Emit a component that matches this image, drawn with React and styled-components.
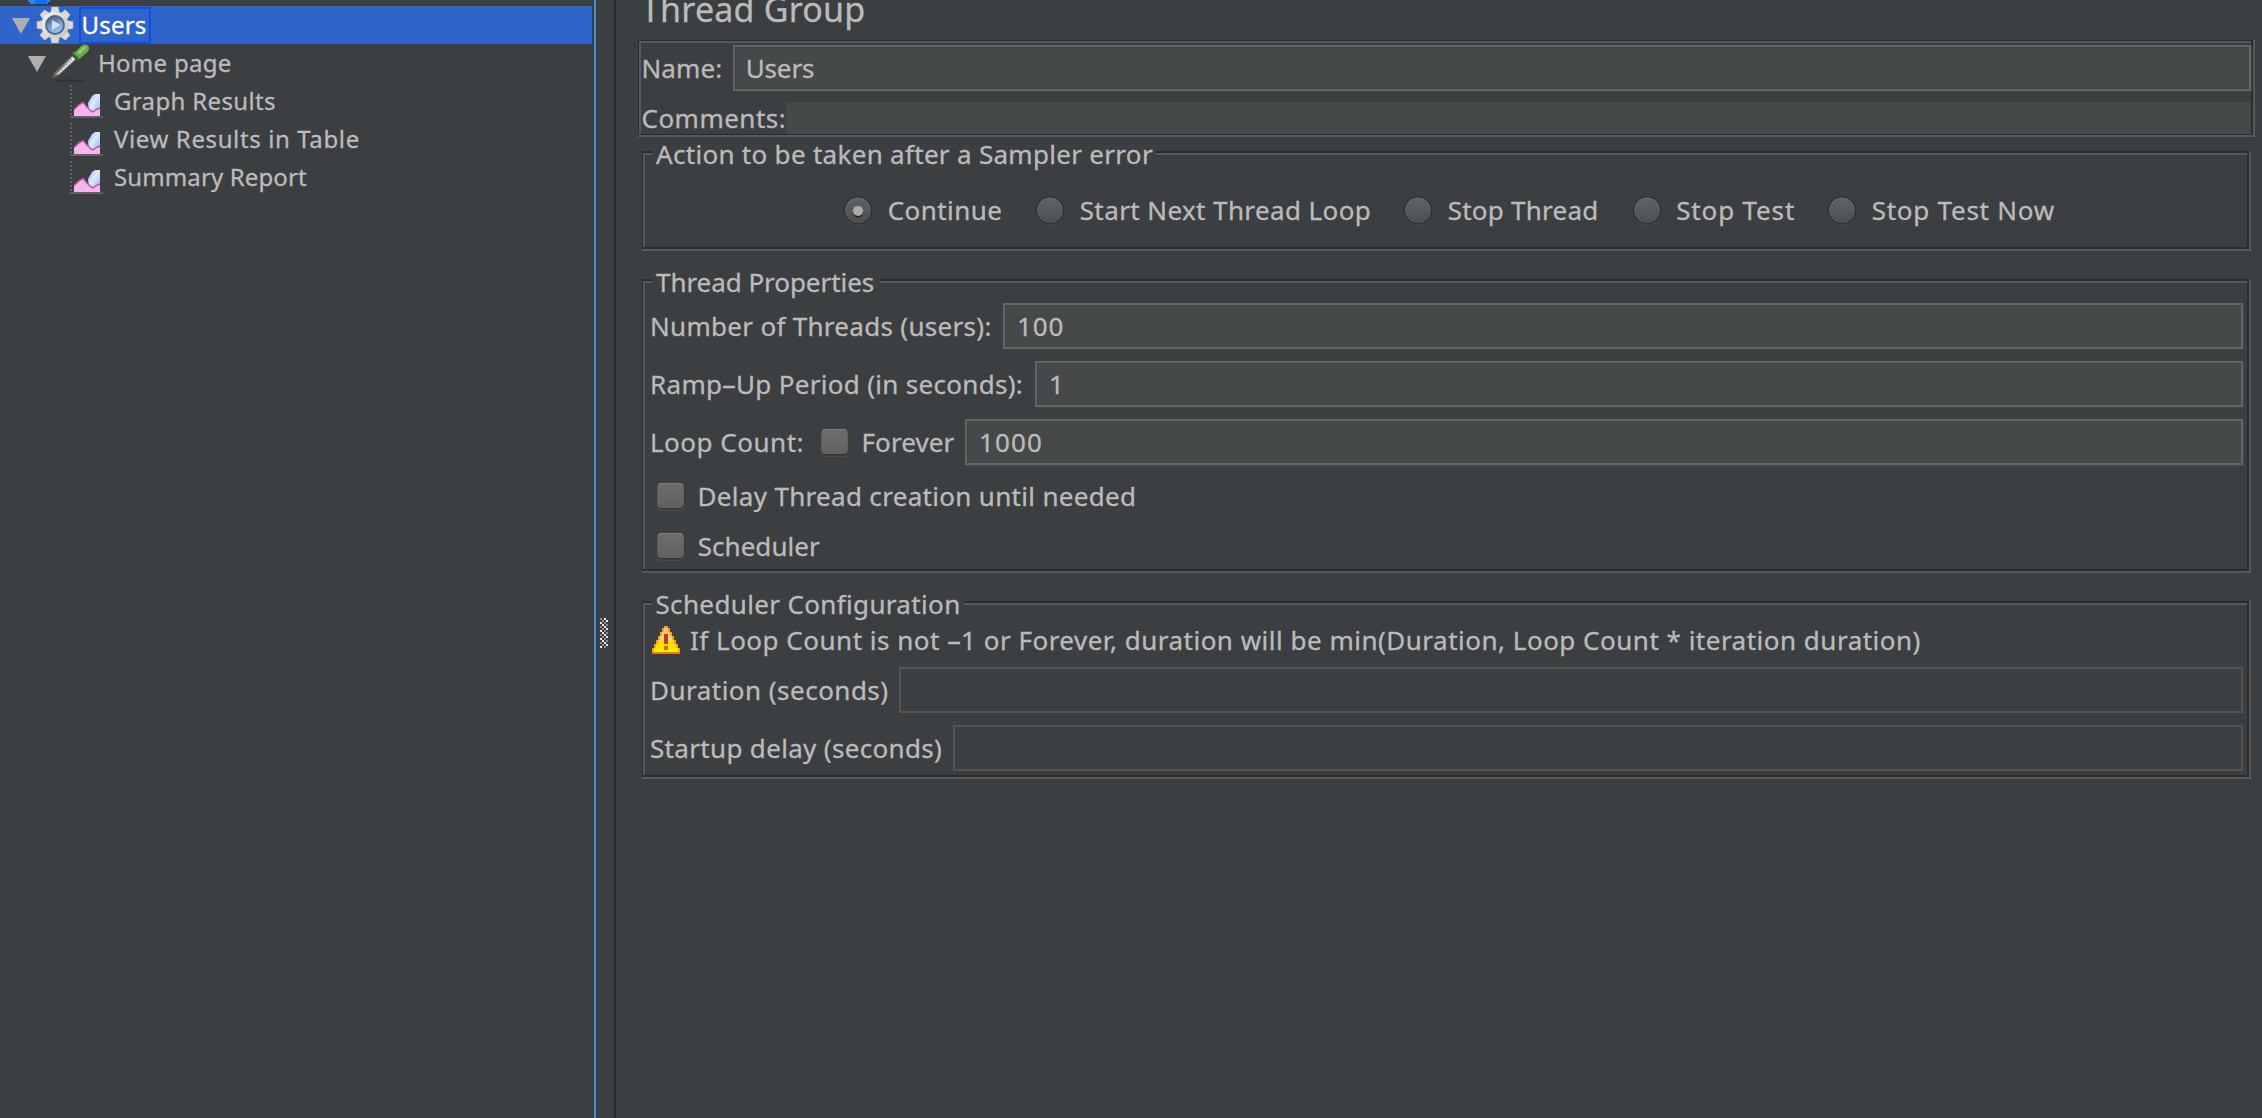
import React from "react";
import styled, { createGlobalStyle } from "styled-components";

const color = {
  bg: "#3c3f41",
  text: "#bbbbbb",
  dark: "#2b2d2f",
  light: "#565a5c",
  field: "#45494a",
  fieldBorder: "#646464",
  disabledBorder: "#55524f",
  selection: "#2f65ca",
};

const GlobalStyle = createGlobalStyle`
  * { box-sizing: border-box; }
  html, body { margin: 0; background: ${color.bg}; overflow: hidden; }
  svg { display: block; flex: none; }
`;

const Window = styled.div`
  display: flex;
  width: 100vw;
  height: 100vh;
  overflow: hidden;
  background: ${color.bg};
  color: ${color.text};
  font: 26px/30px "Noto Sans", "Open Sans", sans-serif;
  -webkit-text-stroke: 0.3px currentColor;
  white-space: nowrap;
`;

/* ---------- tree ---------- */

const Sidebar = styled.aside`
  flex: none;
  width: 596px;
  border-right: 2px solid #4a90cf;
  font-size: 24px;
`;

const CutRow = styled.div`
  height: 6px;
  padding-left: 28px;
  overflow: hidden;
`;

const TreeRow = styled.div`
  display: flex;
  align-items: center;
  height: 38px;
  margin-right: 2px;
  padding-left: ${(p) => p.$indent}px;
  background: ${(p) => (p.$selected ? color.selection : "transparent")};
  color: ${(p) => (p.$selected ? "#ffffff" : color.text)};
`;

const Toggle = styled.svg`
  margin: 2px 6px 0 0;
  fill: #afafaf;
`;

const TreeLabel = styled.span`
  margin-left: ${(p) => p.$gap}px;
  letter-spacing: ${(p) => p.$ls}px;
`;

const FocusLabel = styled.span`
  width: 72px;
  height: 37px;
  margin: 0 0 0 5px;
  padding-left: 0.5px;
  border: 2px solid #0b51dd;
  line-height: 32px;
  letter-spacing: 0.2px;
`;

/* ---------- splitter ---------- */

const Splitter = styled.div`
  flex: none;
  width: 20px;
  padding: 618px 0 0 4px;
  border-right: 2px solid #28292a;
`;

/* ---------- form ---------- */

const Form = styled.main`
  flex: 1;
  min-width: 0;
  padding: 0 7px 0 22px;
`;

const Title = styled.h1`
  margin: 0 0 21px 3px;
  font-size: 34px;
  font-weight: 400;
  line-height: 19px;
  letter-spacing: 0.2px;
`;

const Etched = styled.section`
  border: solid ${color.light};
  border-width: 0 2px 2px 0;
`;

const EtchedInner = styled.div`
  border: 2px solid ${color.dark};
  border-left-width: 1px;
  box-shadow: inset 2px 2px 0 ${color.light};
`;

const HeaderInner = styled(EtchedInner)`
  height: 95px;
  border-top-width: 1px;
  border-bottom-width: 1px;
  padding: 4px 0 0 2px;
`;

const Groups = styled.div`
  display: flex;
  flex-direction: column;
  gap: 28px;
  margin: 14px 4px 0;
`;

const GroupInner = styled(EtchedInner)`
  padding: 0 4px ${(p) => p.$bottom}px 7px;
`;

const Legend = styled.h2`
  width: ${(p) => p.$w}px;
  height: 28px;
  margin: -13px 0 0 2px;
  padding-left: ${(p) => p.$pad || 3}px;
  background: ${color.bg};
  font-size: 26px;
  font-weight: 400;
  line-height: 28px;
  letter-spacing: ${(p) => p.$ls}px;
`;

const Row = styled.div`
  display: flex;
  align-items: center;
  height: ${(p) => p.$h || 46}px;
  margin-top: ${(p) => p.$mt || 0}px;
  padding-left: ${(p) => p.$indent || 0}px;
`;

const Label = styled.label`
  flex: none;
  width: ${(p) => (p.$w ? `${p.$w}px` : "auto")};
  padding-left: ${(p) => p.$pad || 0}px;
  letter-spacing: ${(p) => p.$ls || 0}px;
`;

const Hyphen = styled.span`
  display: inline-block;
  margin: 0 2.5px;
  transform: scaleX(1.8);
`;

const Field = styled.div`
  flex: 1;
  height: 46px;
  padding-left: ${(p) => p.$pad || 12}px;
  border: 2px solid ${(p) => (p.$disabled ? color.disabledBorder : color.fieldBorder)};
  background: ${(p) => (p.$disabled ? "transparent" : color.field)};
  box-shadow: ${(p) => (p.$disabled ? "none" : "inset 1px 1px 0 #414445, 1px 1px 0 #45484a")};
  line-height: 42px;
  letter-spacing: ${(p) => p.$ls || 0}px;
`;

const BareField = styled.div`
  flex: 1;
  height: 32px;
  background: ${color.field};
`;

const RadioRow = styled.div`
  display: grid;
  grid-template-columns: 192px 368px 228.5px 195.5px auto;
  align-items: center;
  height: 40px;
  margin: 22px 0 0 193px;
`;

const Option = styled.label`
  display: flex;
  align-items: center;
  gap: ${(p) => p.$gap}px;
  width: ${(p) => (p.$w ? `${p.$w}px` : "auto")};
  letter-spacing: ${(p) => p.$ls || 0}px;
`;

/* ---------- icons ---------- */

const Triangle = () => (
  <Toggle width="18" height="16" viewBox="0 0 18 16">
    <path d="M0 0H18L9 16Z" />
  </Toggle>
);

const PlanIcon = () => (
  <svg width="24" height="6" viewBox="0 0 24 6">
    <path d="M0 0H22V2H20V4H2V2H0Z" fill="#2a84ea" />
    <path d="M7 0H19V4H7Z" fill="#0f6ff0" />
  </svg>
);

const teeth = [0, 45, 90, 135, 180, 225, 270, 315];

const GearIcon = () => (
  <svg width="38" height="38" viewBox="-19 -19 38 38">
    <defs>
      <linearGradient id="gearMetal" x1="0" y1="0" x2="1" y2="1">
        <stop offset="0" stopColor="#f4f3f1" />
        <stop offset="1" stopColor="#c4c2bd" />
      </linearGradient>
      <linearGradient id="gearCore" x1="0.3" y1="0" x2="0.7" y2="1">
        <stop offset="0" stopColor="#48648c" />
        <stop offset="0.5" stopColor="#7d9cc6" />
        <stop offset="1" stopColor="#a9cbf4" />
      </linearGradient>
    </defs>
    {teeth.map((a) => (
      <path key={a} d="M-4.4 -12L-3.4 -18H3.4L4.4 -12Z" fill="#dcdad6" stroke="#b3b0aa" strokeWidth="0.6" transform={`rotate(${a})`} />
    ))}
    <circle r="13.6" fill="url(#gearMetal)" />
    <circle r="9" fill="url(#gearCore)" stroke="#4a6794" strokeWidth="1.8" />
    <path d="M-3 -5L5.5 0L-3 5Z" fill="#dbe7f6" opacity="0.9" />
  </svg>
);

const DropperIcon = () => (
  <svg width="38" height="38" viewBox="0 0 38 38">
    <ellipse cx="18" cy="36.6" rx="15" ry="1.2" fill="#2f3133" />
    <path d="M0.5 34L3 28L20 11.5L24.5 15.5L7.5 31Z" fill="#6f706d" />
    <path d="M4 30.5L20.5 12.8L23 15.2L7 30Z" fill="#e9e9e6" />
    <path d="M6 28.5L20 15.5" stroke="#55575a" strokeWidth="1" strokeDasharray="2 1.6" />
    <path d="M20 9L22 7L29 14.5L26.5 16.5Z" fill="#3f7f2c" />
    <path d="M22 9.5L29.5 1.5Q33 -0.5 36 1.5Q38.5 4.5 35.5 8L28 14.5Z" fill="#67aa47" />
    <path d="M25 9L31 3Q33 2 34.5 3.5L28 10Z" fill="#93cb74" />
  </svg>
);

const GraphIcon = () => (
  <svg width="36" height="38" viewBox="0 0 36 38">
    <defs>
      <linearGradient id="graphBlue" x1="0" y1="0" x2="1" y2="1">
        <stop offset="0" stopColor="#7fb0ee" />
        <stop offset="0.45" stopColor="#dcebfb" />
        <stop offset="1" stopColor="#8db6ea" />
      </linearGradient>
    </defs>
    <path d="M2 3V35" stroke="#5f6162" strokeWidth="2" strokeDasharray="2 2" />
    <path d="M1 35H34" stroke="#6a6c6d" strokeWidth="1.6" />
    <path d="M20 29L19 21L23 14L26 12H31V28L25 31Z" fill="url(#graphBlue)" />
    <path d="M5 34V28L14 20L20 27L24 30L31 26V34Z" fill="#f7b4ee" />
    <path d="M5 27.5L10 22.5L14 20.5L18 25L22 29L24 30L27 27.5L31 26" fill="none" stroke="#c0508f" strokeWidth="1.4" />
  </svg>
);

const GripIcon = () => (
  <svg width="8" height="30" viewBox="0 0 4 15" shapeRendering="crispEdges">
    {Array.from({ length: 15 }, (_, y) => {
      const odd = y % 2;
      const flip = y % 4 > 1;
      return (
        <g key={y}>
          <rect x={odd ? 1 : 0} y={y} width="1" height="1" fill={flip ? "#e6e6e6" : "#8c8c8c"} />
          <rect x={odd ? 3 : 2} y={y} width="1" height="1" fill={flip ? "#8c8c8c" : "#e6e6e6"} />
        </g>
      );
    })}
  </svg>
);

const RadioIcon = ({ checked }) => (
  <svg width="30" height="34" viewBox="0 0 30 34">
    <defs>
      <linearGradient id="radioFill" x1="0" y1="0" x2="0" y2="1">
        <stop offset="0" stopColor="#606365" />
        <stop offset="1" stopColor="#4b4f51" />
      </linearGradient>
    </defs>
    <circle cx="15" cy="19" r="13.8" fill="#494c4d" />
    <circle cx="15" cy="17.4" r="14.2" fill="#2e3032" />
    <circle cx="15" cy="17.2" r="12.8" fill="#6c6f70" />
    <circle cx="15" cy="17.8" r="12.4" fill="url(#radioFill)" />
    {checked && <circle cx="15" cy="19.8" r="5" fill="#26282a" />}
    {checked && <circle cx="15" cy="17.9" r="5" fill="#aaaaaa" />}
  </svg>
);

const CheckIcon = () => (
  <svg width="30" height="30" viewBox="0 0 30 30">
    <defs>
      <linearGradient id="checkFill" x1="0" y1="0" x2="0" y2="1">
        <stop offset="0" stopColor="#6d6d6d" />
        <stop offset="1" stopColor="#606060" />
      </linearGradient>
    </defs>
    <rect x="0.5" y="2" width="28" height="28" rx="5" fill="#4a4c4d" />
    <rect x="0.5" y="0.8" width="28" height="27.8" rx="5" fill="#303233" />
    <rect x="1.5" y="1.8" width="26" height="25" rx="3.5" fill="#7c7c7c" />
    <rect x="1.5" y="3" width="26" height="23.8" rx="3.2" fill="url(#checkFill)" />
  </svg>
);

const WarnSvg = styled.svg`
  margin: 0 10px 0 2px;
`;

const WarningIcon = () => (
  <WarnSvg width="28" height="28" viewBox="0 0 14 14" shapeRendering="crispEdges">
    <defs>
      <linearGradient id="warnFill" x1="0" y1="0" x2="0" y2="1">
        <stop offset="0" stopColor="#f7bd83" />
        <stop offset="0.45" stopColor="#ffd08a" />
        <stop offset="0.62" stopColor="#ffd800" />
        <stop offset="1" stopColor="#fff200" />
      </linearGradient>
    </defs>
    <path d="M6 0H8V1H9V3H10V5H11V7H12V9H13V11H14V14H0V11H1V9H2V7H3V5H4V3H5V1H6Z" fill="#f5a512" />
    <path d="M6 1H8V3H9V5H10V7H11V9H12V11H13V13H1V11H2V9H3V7H4V5H5V3H6Z" fill="url(#warnFill)" />
    <path d="M0 13H14V14H0Z" fill="#e8790a" />
    <path d="M6 4H8V9H6Z" fill="#b8400f" />
    <path d="M6 10H8V12H6Z" fill="#d9660a" />
  </WarnSvg>
);

/* ---------- data ---------- */

const results = [
  { name: "Graph Results", ls: 0.35 },
  { name: "View Results in Table", ls: 0.62 },
  { name: "Summary Report", ls: 0.12 },
];

const actions = [
  { name: "Continue", ls: 0.43, checked: true },
  { name: "Start Next Thread Loop", ls: 0.4 },
  { name: "Stop Thread", ls: 0.25 },
  { name: "Stop Test", ls: 0.85 },
  { name: "Stop Test Now", ls: 0.75 },
];

const Group = ({ title, legend, bottom, children }) => (
  <Etched>
    <GroupInner $bottom={bottom}>
      <Legend $w={legend.w} $ls={legend.ls} $pad={legend.pad}>{title}</Legend>
      {children}
    </GroupInner>
  </Etched>
);

export default function App() {
  return (
    <Window>
      <GlobalStyle />
      <Sidebar>
        <CutRow><PlanIcon /></CutRow>
        <TreeRow $indent={12} $selected>
          <Triangle />
          <GearIcon />
          <FocusLabel>Users</FocusLabel>
        </TreeRow>
        <TreeRow $indent={28}>
          <Triangle />
          <DropperIcon />
          <TreeLabel $gap={8} $ls={0.28}>Home page</TreeLabel>
        </TreeRow>
        {results.map((r) => (
          <TreeRow key={r.name} $indent={69}>
            <GraphIcon />
            <TreeLabel $gap={9} $ls={r.ls}>{r.name}</TreeLabel>
          </TreeRow>
        ))}
      </Sidebar>
      <Splitter><GripIcon /></Splitter>
      <Form>
        <Title>Thread Group</Title>
        <Etched>
          <HeaderInner>
            <Row>
              <Label $w={92} $pad={0.5} $ls={0.1}>Name:</Label>
              <Field $pad={10.7} $ls={-0.14}>Users</Field>
            </Row>
            <Row $h={32} $mt={11}>
              <Label $w={145} $pad={0.5} $ls={0.48}>Comments:</Label>
              <BareField />
            </Row>
          </HeaderInner>
        </Etched>
        <Groups>
          <Group title="Action to be taken after a Sampler error" legend={{ w: 504, ls: 0.3, pad: 4 }} bottom={17}>
            <RadioRow>
              {actions.map((a) => (
                <Option key={a.name} $gap={14.7} $ls={a.ls}>
                  <RadioIcon checked={a.checked} />
                  {a.name}
                </Option>
              ))}
            </RadioRow>
          </Group>
          <Group title="Thread Properties" legend={{ w: 228, ls: -0.05, pad: 4 }} bottom={8}>
            <Row $mt={7}>
              <Label $w={353} $ls={0.3}>Number of Threads (users):</Label>
              <Field $ls={0.9}>100</Field>
            </Row>
            <Row $mt={12}>
              <Label $w={385} $ls={0.31}>Ramp<Hyphen>-</Hyphen>Up Period (in seconds):</Label>
              <Field>1</Field>
            </Row>
            <Row $mt={12}>
              <Label $w={170} $ls={0.5}>Loop Count:</Label>
              <Option $gap={11.5} $w={145} $ls={0.08}>
                <CheckIcon />
                Forever
              </Option>
              <Field $ls={1.1}>1000</Field>
            </Row>
            <Row $h={30} $mt={16} $indent={6}>
              <Option $gap={11.5} $ls={0.32}>
                <CheckIcon />
                Delay Thread creation until needed
              </Option>
            </Row>
            <Row $h={30} $mt={20} $indent={6}>
              <Option $gap={11.7} $ls={0.05}>
                <CheckIcon />
                Scheduler
              </Option>
            </Row>
          </Group>
          <Group title="Scheduler Configuration" legend={{ w: 312, ls: 0.35, pad: 3.5 }} bottom={4}>
            <Row $h={30} $mt={7}>
              <WarningIcon />
              <Label $ls={0.5}>
                If Loop Count is not <Hyphen>-</Hyphen>1 or Forever, duration will be min(Duration, Loop Count * iteration duration)
              </Label>
            </Row>
            <Row $mt={12}>
              <Label $w={249} $ls={0.48}>Duration (seconds)</Label>
              <Field $disabled />
            </Row>
            <Row $mt={12}>
              <Label $w={303} $ls={0.33}>Startup delay (seconds)</Label>
              <Field $disabled />
            </Row>
          </Group>
        </Groups>
      </Form>
    </Window>
  );
}
